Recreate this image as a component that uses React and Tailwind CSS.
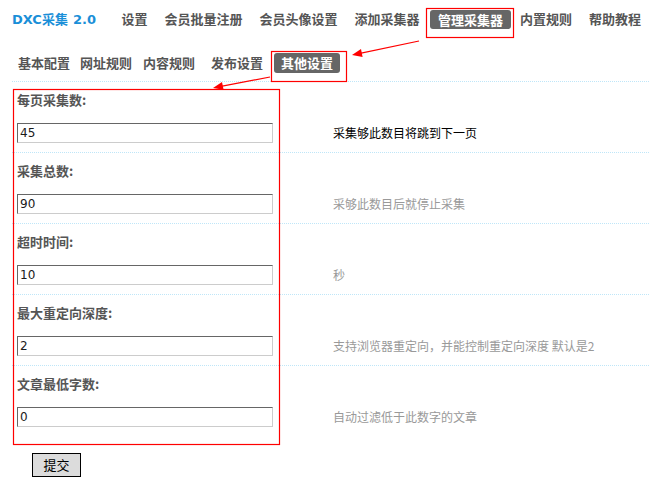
import React from "react";

const CJK = { fontFamily: '"Noto Sans CJK SC", "Liberation Sans", sans-serif' };

function Row({ label, value, desc, dark, last }) {
  return (
    <div className={"flex " + (last ? "" : "border-b border-dotted border-[#bfe6f8]")}>
      <div className="w-[268px] shrink-0 pl-[5px] pt-[8px] pb-[9px]">
        <div className="h-[20px] leading-[20px] text-[13px] font-bold text-[#555]">{label}:</div>
        <input
          readOnly
          value={value}
          className="mt-[13px] block w-[256px] h-[20px] border border-t-[#666] border-l-[#666] border-b-[#ccc] border-r-[#ccc] pl-[2px] text-[12px] text-[#1a1a1a] outline-none"
          style={{ fontFamily: '"DejaVu Sans", Verdana, sans-serif' }}
        />
      </div>
      <div className={"pl-[53px] pt-[41px] leading-[20px] text-[12px] whitespace-nowrap " + (dark ? "text-black" : "text-[#999]")}>
        {desc}
      </div>
    </div>
  );
}

export default function App() {
  return (
    <div className="relative w-[649px] h-[483px] bg-white overflow-hidden" style={CJK}>
      {/* top nav */}
      <div className="flex items-center h-[38px] pl-[12px] text-[13px] font-bold text-[#555] whitespace-nowrap [&>span]:shrink-0">
        <span className="text-[#1a8fd8]">
          <span style={{ fontFamily: '"DejaVu Sans", Verdana, sans-serif' }}>DXC</span>采集
          <span className="ml-[5px]" style={{ fontFamily: '"DejaVu Sans", Verdana, sans-serif' }}>2.0</span>
        </span>
        <span className="ml-[17px] px-[8.5px]">设置</span>
        <span className="px-[8.5px]">会员批量注册</span>
        <span className="px-[8.5px]">会员头像设置</span>
        <span className="px-[8.5px]">添加采集器</span>
        <span className="ml-[2px] h-[19px] leading-[19px] px-[8px] rounded-[3px] bg-[#666] text-white">管理采集器</span>
        <span className="px-[9px]">内置规则</span>
        <span className="pl-[8px]">帮助教程</span>
      </div>

      <div className="ml-[12px]">
        {/* sub nav */}
        <div className="flex items-center pt-[15px] pb-[8px] pl-[6px] text-[13px] font-bold text-[#555] whitespace-nowrap border-b border-dotted border-[#bfe6f8]">
          <span className="h-[20px] leading-[20px]">基本配置</span>
          <span className="ml-[10px] leading-[20px]">网址规则</span>
          <span className="ml-[11px] leading-[20px]">内容规则</span>
          <span className="ml-[16px] leading-[20px]">发布设置</span>
          <span className="ml-[11px] h-[20px] leading-[20px] px-[7px] rounded-[3px] bg-[#666] text-white">其他设置</span>
        </div>

        <Row label="每页采集数" value="45" desc="采集够此数目将跳到下一页" dark />
        <Row label="采集总数" value="90" desc="采够此数目后就停止采集" />
        <Row label="超时时间" value="10" desc="秒" />
        <Row label="最大重定向深度" value="2" desc="支持浏览器重定向，并能控制重定向深度 默认是2" />
        <Row label="文章最低字数" value="0" desc="自动过滤低于此数字的文章" last />

        <button className="mt-[17px] ml-[20px] w-[49px] h-[24px] bg-[#dcdcdc] border border-black text-[13px] text-black leading-[20px]">
          提交
        </button>
      </div>

      {/* annotations */}
      <svg className="absolute left-0 top-0 pointer-events-none" width="649" height="483" viewBox="0 0 649 483">
        <rect x="426.5" y="8.5" width="87" height="29" fill="none" stroke="#f00" strokeWidth="1.2" />
        <rect x="271.5" y="51.5" width="75" height="30" fill="none" stroke="#f00" strokeWidth="1.2" />
        <rect x="13.5" y="89.5" width="266" height="355" fill="none" stroke="#f00" strokeWidth="1.2" />
        <line x1="419" y1="41" x2="360" y2="53.4" stroke="#f00" strokeWidth="1.2" />
        <polygon points="352,55 362.6,56.9 361,49" fill="#f00" />
        <line x1="270" y1="77" x2="221" y2="86.3" stroke="#f00" strokeWidth="1.2" />
        <polygon points="213,88 223.6,89.8 222,82" fill="#f00" />
      </svg>
    </div>
  );
}
